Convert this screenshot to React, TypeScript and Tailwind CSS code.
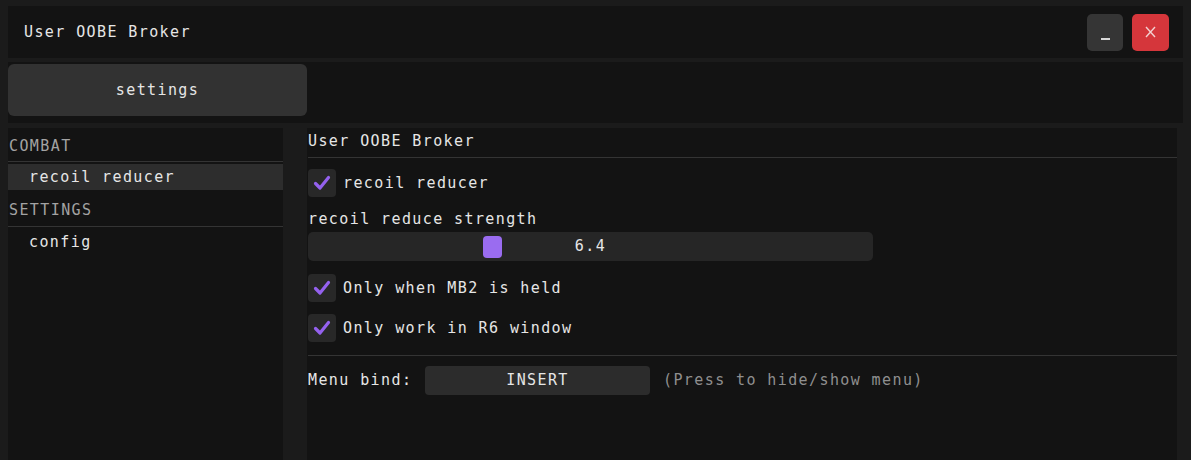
import React from "react";

const mono = "font-['DejaVu_Sans_Mono',monospace] text-[15px] tracking-[1.4px] leading-none";

function Check({ label }: { label: string }) {
  return (
    <div className="flex h-[28px] items-center gap-[7px]">
      <div className="flex h-[28px] w-[28px] items-center justify-center rounded-[4px] bg-[#282828]">
        <svg width="20" height="20" viewBox="0 0 20 20">
          <polyline
            points="3.5,10.5 8,15 16.5,4.5"
            fill="none"
            stroke="#9461ee"
            strokeWidth="3.2"
            strokeLinecap="round"
            strokeLinejoin="round"
          />
        </svg>
      </div>
      <span className="text-[#e6e6e6]">{label}</span>
    </div>
  );
}

export default function App() {
  return (
    <div className={`flex h-[460px] w-full flex-col overflow-hidden bg-[#1b1b1b] px-[8px] pt-[6px] ${mono}`}>
      {/* title bar */}
      <div className="flex h-[52px] shrink-0 items-center justify-between bg-[#131313] pl-[16px] pr-[14px]">
        <span className="text-[#e6e6e6]">User OOBE Broker</span>
        <div className="flex gap-[9px]">
          <button className="flex h-[37px] w-[36px] items-end justify-center rounded-[5px] bg-[#353535] pb-[11px]">
            <span className="block h-[2px] w-[9px] bg-[#d8d8d8]" />
          </button>
          <button className="flex h-[37px] w-[37px] items-center justify-center rounded-[5px] bg-[#d5363b] text-[#f2d0d0]">
            <svg width="11" height="12" viewBox="0 0 11 12">
              <path d="M1 1 L10 11 M10 1 L1 11" stroke="#f2d0d0" strokeWidth="1.4" fill="none" />
            </svg>
          </button>
        </div>
      </div>

      {/* tab bar */}
      <div className="mt-[4px] h-[61px] shrink-0 bg-[#131313] pt-[2px]">
        <button className="flex h-[52px] w-[299px] items-center justify-center rounded-[6px] bg-[#323232] text-[#e6e6e6]">
          settings
        </button>
      </div>

      {/* body */}
      <div className="mt-[5px] flex min-h-0 flex-1">
        <div className="flex w-[275px] shrink-0 flex-col bg-[#131313] pt-[11px]">
          <div className="pl-[1px] text-[#a3a3a3]">COMBAT</div>
          <div className="mt-[7px] h-px bg-[#343434]" />
          <div className="mt-[2px] flex h-[26px] items-center bg-[#2d2d2d] pl-[21px] text-[#e6e6e6]">
            recoil reducer
          </div>
          <div className="mt-[13px] pl-[1px] text-[#a3a3a3]">SETTINGS</div>
          <div className="mt-[8px] h-px bg-[#343434]" />
          <div className="mt-[8px] pl-[21px] text-[#e6e6e6]">config</div>
        </div>

        <div className="ml-[24px] mr-[6px] flex flex-1 flex-col bg-[#131313] pl-[1px]">
          <div className="pt-[6px] text-[#e6e6e6]">User OOBE Broker</div>
          <div className="mt-[8px] h-px bg-[#343434]" />
          <div className="mt-[11px]">
            <Check label="recoil reducer" />
          </div>
          <div className="mt-[15px] text-[#e6e6e6]">recoil reduce strength</div>
          <div className="relative mt-[5px] flex h-[29px] w-[565px] items-center justify-center rounded-[5px] bg-[#262626] text-[#e6e6e6]">
            <div className="absolute left-[175px] top-[4px] h-[22px] w-[19px] rounded-[4px] bg-[#9a6cf0]" />
            <span className="relative">6.4</span>
          </div>
          <div className="mt-[13px]">
            <Check label="Only when MB2 is held" />
          </div>
          <div className="mt-[12px]">
            <Check label="Only work in R6 window" />
          </div>
          <div className="mt-[13px] h-px bg-[#343434]" />
          <div className="mt-[10px] flex items-center">
            <span className="w-[117px] text-[#e6e6e6]">Menu bind:</span>
            <button className="flex h-[29px] w-[225px] items-center justify-center rounded-[4px] bg-[#2c2c2c] text-[#e6e6e6]">
              INSERT
            </button>
            <span className="ml-[13px] text-[#8f8f8f]">(Press to hide/show menu)</span>
          </div>
        </div>
      </div>
    </div>
  );
}
